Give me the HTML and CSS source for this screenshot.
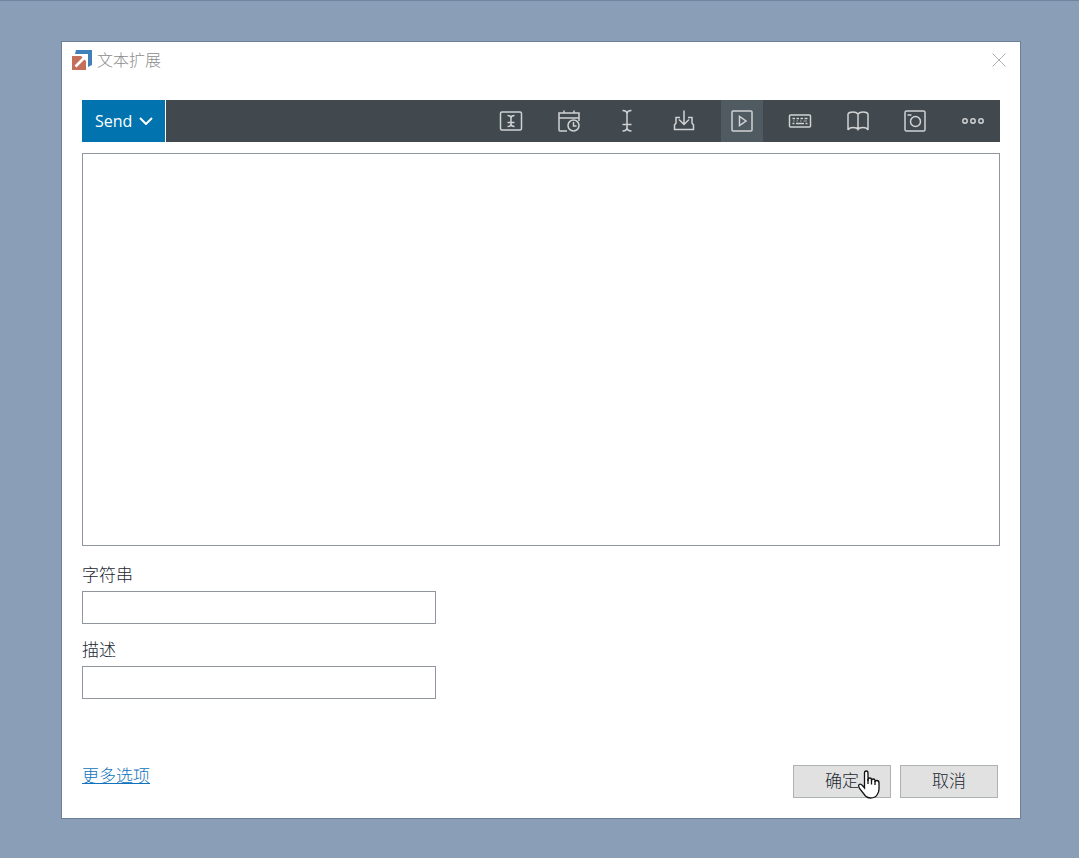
FILE: index.html
```html
<!DOCTYPE html>
<html lang="zh-CN">
<head>
  <meta charset="UTF-8">
  <meta name="viewport" content="width=device-width, initial-scale=1.0">
  <title>文本扩展</title>
  <link rel="stylesheet" href="styles.css">
</head>
<body>

<form class="window">
  <div class="title-bar">
    <svg class="logo" viewBox="0 0 20 20" width="20" height="20">
      <path d="M4 0H20V15L16 17V4H3Z" fill="#3f80b8"/>
      <rect x="0" y="6" width="14" height="14" fill="#c56f5b"/>
      <path d="M3.500 16.500L13 7" stroke="#fff" stroke-width="2.600"/>
      <path d="M9 6H14V11Z" fill="#fff"/>
    </svg>
    <h1>文本扩展</h1>
    <button type="button" class="close" aria-label="关闭">
      <svg viewBox="0 0 14 14" width="14" height="14"><path d="M.5 .5L13.500 13.500M13.500 .5L.5 13.500"/></svg>
    </button>
  </div>

  <div class="content">
    <div class="toolbar">
      <button type="button" class="send">Send
        <svg viewBox="0 0 14 8" width="14" height="8"><path d="M1 1L7 7L13 1"/></svg>
      </button>
      <div class="tools">
        <button type="button" class="tool" aria-label="插入文本框">
          <svg viewBox="0 0 24 24"><rect x="1.500" y="3" width="21" height="18" rx="1.500"/><path d="M8.500 6.500Q12 6.500 12 9Q12 6.500 15.500 6.500M12 8V16M8.500 17.500Q12 17.500 12 15Q12 17.500 15.500 17.500M8.500 13.500H15.500"/></svg>
        </button>
        <button type="button" class="tool" aria-label="日期和时间">
          <svg viewBox="0 0 24 24"><path d="M10 22H3Q2 22 2 21V4H22V9H2M22 9V12M7 1.500V4M17 1.500V4"/><circle cx="16.500" cy="16.500" r="5.500"/><path d="M16.500 13V17H19.500"/></svg>
        </button>
        <button type="button" class="tool" aria-label="光标位置">
          <svg viewBox="0 0 24 24"><path d="M7.500 1.500Q12 1.500 12 5Q12 1.500 16.500 1.500M12 4V19M7.500 22Q12 22 12 18.500Q12 22 16.500 22M7.500 15.500H16.500"/></svg>
        </button>
        <button type="button" class="tool" aria-label="粘贴">
          <svg viewBox="0 0 24 24"><path d="M8 8.500H4V14L2.500 16V20.500H21.500V16L20 14V8.500H16M12 1.500V15M7 10.500L12 15.500L17 10.500"/></svg>
        </button>
        <button type="button" class="tool active" aria-label="运行">
          <svg viewBox="0 0 24 24"><rect x="2" y="2" width="20" height="20" rx="1"/><path d="M9.500 7.500V16.500L16 12Z"/></svg>
        </button>
        <button type="button" class="tool" aria-label="按键">
          <svg viewBox="0 0 24 24"><rect x="1.500" y="6" width="21" height="12" rx="1"/><path d="M4.500 9.500H7M8.500 9.500H11M12.500 9.500H15M16.500 9.500H19.500M4.500 14.500H6.500M8 14.500H16M17.500 14.500H19.500"/><path d="M5 12H6.500M8.500 12H10M12 12H13.500M15.500 12H19" opacity=".5"/></svg>
        </button>
        <button type="button" class="tool" aria-label="词典">
          <svg viewBox="0 0 24 24"><path d="M12 5Q10.500 3 7 3Q3 3 2 5V21Q3 18.500 7 18.500Q11 18.500 12 20.500Q13 18.500 17 18.500Q21 18.500 22 21V5Q21 3 17 3Q13.500 3 12 5V20.500"/></svg>
        </button>
        <button type="button" class="tool" aria-label="图片">
          <svg viewBox="0 0 24 24"><rect x="2" y="2" width="20" height="20" rx="1.500"/><circle cx="12.500" cy="12.500" r="5"/><path d="M4.500 6H8.500"/></svg>
        </button>
        <button type="button" class="tool" aria-label="更多">
          <svg viewBox="0 0 24 24"><circle cx="4" cy="12" r="2.200"/><circle cx="12" cy="12" r="2.200"/><circle cx="20" cy="12" r="2.200"/></svg>
        </button>
      </div>
    </div>

    <textarea class="editor" aria-label="文本"></textarea>

    <label for="string">字符串</label>
    <input type="text" id="string" name="string">

    <label for="description">描述</label>
    <input type="text" id="description" name="description">

    <div class="actions">
      <a href="#">更多选项</a>
      <button type="button" class="confirm">确定
        <svg class="cursor" viewBox="0 0 22 29" width="22" height="29">
          <path d="M6.500 18V3Q6.500 1 8.200 1Q10 1 10 3V11V9.500Q10 8 11.700 8Q13.500 8 13.500 9.500V11V10.200Q13.500 9 15.200 9Q17 9 17 10.500V12Q17 10.500 18.900 10.500Q21 10.500 21 13V19Q21 22 19 25Q17 28 12.500 28Q9.500 28 7.500 26L1.500 18.500Q0 15.500 1.200 14.500Q2.600 13.500 4.500 15.500Z" fill="#fff"/>
          <path d="M10 9V14M13.500 10V14.500M17 11V15" fill="none"/>
        </svg>
      </button>
      <button type="button">取消</button>
    </div>
  </div>
</form>

</body>
</html>
```
FILE: styles.css
```css
* {
  box-sizing: border-box;
}

body {
  margin: 0;
  min-height: 100vh;
  padding: 40px 58px 40px 61px;
  border-top: 1px solid #6e84a0;
  background-color: #8b9eb8;
  color: #1c2833;
  font-family: "Open Sans", "Noto Sans CJK SC", sans-serif;
  font-size: 17px;
  font-weight: 300;
  line-height: 24px;
}

button,
input,
textarea {
  font: inherit;
  color: inherit;
}

button {
  padding: 0;
  border: none;
  background: none;
}

svg {
  fill: none;
}

.window {
  border: 1px solid #6b7f98;
  background-color: #ffffff;
}

/* Title bar */
.title-bar {
  display: flex;
  align-items: center;
  gap: 5px;
  height: 36px;
  padding: 0 14px 0 10px;
}

.title-bar h1 {
  flex: 1;
  margin: 0;
  color: #8c8c8c;
  font-size: 16px;
  font-weight: 300;
}

.close {
  display: flex;
  stroke: #b0b0b0;
}

.content {
  padding: 22px 20px 20px;
}

/* Toolbar */
.toolbar {
  display: flex;
  justify-content: space-between;
  height: 42px;
  margin-bottom: 11px;
  background-color: #41494e;
}

.send {
  display: flex;
  align-items: center;
  gap: 7px;
  padding: 0 12px 0 13px;
  border-right: 1px solid #ffffff;
  background-color: #0173ae;
  color: #ffffff;
  font-size: 16px;
  font-weight: 400;
}

.send svg {
  stroke: #ffffff;
  stroke-width: 2;
}

.tools {
  display: flex;
  justify-content: space-between;
  width: 510px;
  padding-right: 6px;
}

.tool {
  display: flex;
  align-items: center;
  justify-content: center;
  width: 42px;
}

.tool svg {
  width: 24px;
  height: 24px;
  stroke: #d0d2d3;
  stroke-width: 1.5;
}

.tool.active {
  background-color: #505a61;
}

/* Fields */
.editor {
  display: block;
  width: 100%;
  height: 393px;
  margin-bottom: 17px;
  border: 1px solid #9195a0;
  resize: none;
}

label {
  display: block;
  margin-bottom: 4px;
}

input {
  display: block;
  width: 354px;
  max-width: 100%;
  height: 33px;
  margin-bottom: 14px;
  padding: 0 8px;
  border: 1px solid #9195a0;
}

/* Bottom row */
.actions {
  display: flex;
  align-items: center;
  gap: 9px;
  margin-top: 65px;
  padding-right: 2px;
}

.actions a {
  margin-right: auto;
  padding-bottom: 10px;
  color: #1173bd;
}

.actions button {
  position: relative;
  width: 98px;
  height: 33px;
  border: 1px solid #adb2b2;
  background-color: #e1e1e1;
}

/* Hand pointer over the confirm button */
.cursor {
  position: absolute;
  top: 4px;
  right: 10px;
  stroke: #111111;
  stroke-width: 1.3;
}
```
